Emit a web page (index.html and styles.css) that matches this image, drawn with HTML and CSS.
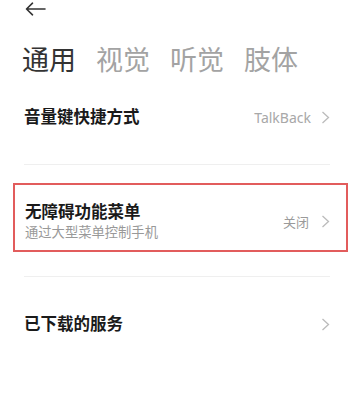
FILE: index.html
```html
<!DOCTYPE html>
<html lang="zh-CN">
<head>
    <meta charset="UTF-8">
    <meta name="viewport" content="width=device-width, initial-scale=1.0">
    <title>无障碍</title>
    <link rel="stylesheet" href="styles.css">
</head>
<body>
    <div class="top_bar">
        <svg class="back" width="21" height="14" viewBox="0 0 21 14">
            <path d="M1.5 7H20M7.5 1.2L1.5 7l6 5.8" fill="none" stroke="#333" stroke-width="1.6" stroke-linecap="round" stroke-linejoin="round"/>
        </svg>
    </div>
    <ul class="tabs">
        <li class="active">通用</li>
        <li>视觉</li>
        <li>听觉</li>
        <li>肢体</li>
    </ul>
    <div class="item first">
        <div class="title">音量键快捷方式</div>
        <div class="right">
            <span class="value latin">TalkBack</span>
            <svg class="arrow" width="9" height="13" viewBox="0 0 9 13"><path d="M1.5 1l6 5.5-6 5.5" fill="none" stroke="#bbb" stroke-width="1.3"/></svg>
        </div>
    </div>
    <div class="line"></div>
    <div class="item mark">
        <div class="content">
            <div class="title">无障碍功能菜单</div>
            <div class="desc">通过大型菜单控制手机</div>
        </div>
        <div class="right">
            <span class="value">关闭</span>
            <svg class="arrow" width="9" height="13" viewBox="0 0 9 13"><path d="M1.5 1l6 5.5-6 5.5" fill="none" stroke="#bbb" stroke-width="1.3"/></svg>
        </div>
    </div>
    <div class="line second"></div>
    <div class="item last">
        <div class="title">已下载的服务</div>
        <div class="right">
            <svg class="arrow" width="9" height="13" viewBox="0 0 9 13"><path d="M1.5 1l6 5.5-6 5.5" fill="none" stroke="#bbb" stroke-width="1.3"/></svg>
        </div>
    </div>
</body>
</html>
```

FILE: styles.css
```css
*{
    margin: 0;
    padding: 0;
}
body{
    width: 354px;
    height: 394px;
    background: #fff;
    font-family: "Noto Sans", "Noto Sans CJK SC", sans-serif;
    color: #1a1a1a;
    overflow: hidden;
}
.top_bar{
    height: 18px;
    padding-left: 25px;
}
.back{
    display: block;
    margin-top: 2px;
}
.tabs{
    display: flex;
    gap: 20px;
    margin-top: 22px;
    padding-left: 22px;
    list-style: none;
}
.tabs li{
    font-size: 27px;
    line-height: 36px;
    color: #a3a3a3;
}
.tabs li.active{
    color: #333;
}
.item{
    display: flex;
    align-items: center;
    justify-content: space-between;
    padding: 0 24px;
}
.item .title{
    font-size: 16.5px;
    line-height: 24px;
    font-weight: 700;
}
.first{
    padding-top: 27px;
    padding-bottom: 35px;
}
.right{
    display: flex;
    align-items: center;
}
.value{
    font-size: 13px;
    color: #9a9a9a;
    margin-right: 12px;
}
.value.latin{
    font-size: 14px;
    color: #a8a8a8;
    margin-right: 10px;
}
.arrow{
    display: block;
}
.line{
    height: 1px;
    background: #efefef;
    margin: 0 24px;
}
.mark{
    margin: 18px 6px 0 13px;
    padding: 16px 16px 9px 10px;
    border: 2px solid #e25c5c;
}
.mark .title{
    line-height: 22px;
}
.desc{
    font-size: 13.3px;
    line-height: 18px;
    color: #999;
}
.line.second{
    margin-top: 24px;
}
.last{
    padding-top: 35px;
}
```
